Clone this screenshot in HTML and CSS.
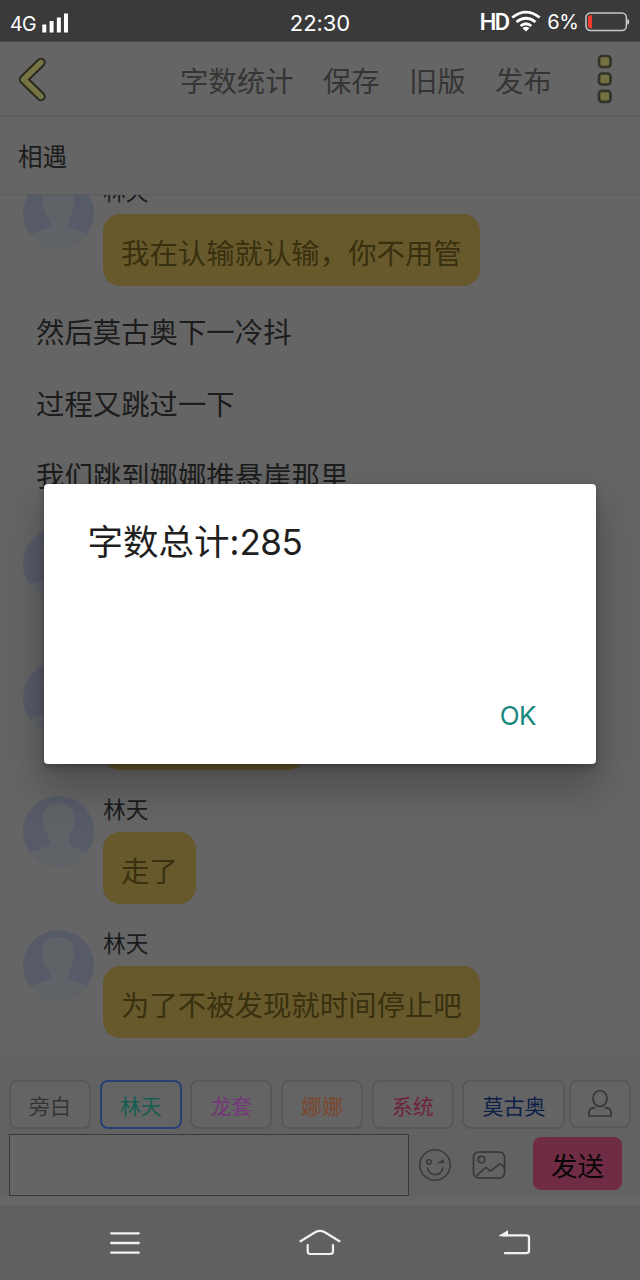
FILE: index.html
```
<!DOCTYPE html>
<html lang="zh-CN">
<head>
<meta charset="utf-8">
<title>相遇</title>
<link rel="stylesheet" href="styles.css">
</head>
<body>
<svg class="defs" width="0" height="0">
  <symbol id="avatar" viewBox="0 0 71 71">
    <clipPath id="round"><circle cx="35.5" cy="35.5" r="35.5"/></clipPath>
    <g clip-path="url(#round)">
      <rect width="71" height="71" fill="#575b68"/>
      <path d="M35.500 7C45 6 52 13 51.500 25C51 32 48 36 46 41Q45.500 46 47 49C52 52 61 54 66 58V71H5V58C11 54 21 53 27.500 48Q27 43 25 40C21 34 19 28 19.500 21C20 12 27 7 35.500 7Z" fill="#5f6367"/>
    </g>
  </symbol>
</svg>
<div class="screen">
  <div class="status">
    <span class="net">4G</span>
    <svg class="signal" width="27" height="21" viewBox="0 0 27 21" stroke="#fff" stroke-width="4" stroke-linecap="butt"><path d="M2.300 12.500V20.500M9.600 9V20.500M16.900 5.500V20.500M24 1.500V20.500"/></svg>
    <span class="clock">22:30</span>
    <span class="hd">HD</span>
    <svg class="wifi" width="30" height="22" viewBox="0 0 30 22" fill="none" stroke="#fff" stroke-width="2.700"><path d="M1.200 7.500Q15 -3.500 28.800 7.500M5.500 12Q15 4.500 24.500 12M9.600 16Q15 11.500 20.400 16"/><path d="M11.500 18.200Q15 15.500 18.500 18.200L15 21.500Z" fill="#fff" stroke="none"/></svg>
    <span class="percent">6%</span>
    <svg class="battery" width="45" height="20" viewBox="0 0 45 20"><rect x="1" y="1" width="40.500" height="17.500" rx="4.500" fill="none" stroke="#c8c8c8" stroke-width="1.500"/><path d="M7 3.300V16.200H5.500Q3 16.200 3 13.500V6Q3 3.300 5.500 3.300Z" fill="#f33c2e"/><path d="M42.500 7Q44.300 7 44.300 9.750Q44.300 12.500 42.500 12.500Z" fill="#ddd"/></svg>
  </div>
  <header class="toolbar">
    <svg class="back" width="30" height="44" viewBox="0 0 30 44" fill="none" stroke-linecap="round" stroke-linejoin="round"><path d="M23 4.500L5.500 21.500L23 38.500" stroke="#292920" stroke-width="9.500"/><path d="M23 4.500L5.500 21.500L23 38.500" stroke="#777443" stroke-width="5.500"/></svg>
    <nav class="actions"><span>字数统计</span><span>保存</span><span>旧版</span><span>发布</span></nav>
    <svg class="more" width="16" height="50" viewBox="0 0 16 50" fill="#72713f" stroke="#33332b" stroke-width="2.700"><rect x="2" y="2" width="11.500" height="11" rx="3"/><rect x="2" y="19.500" width="11.500" height="11" rx="3"/><rect x="2" y="36.800" width="11.500" height="11" rx="3"/></svg>
  </header>
  <div class="title">相遇</div>
  <main class="chat">
    <div class="row"><svg class="avatar"><use href="#avatar"/></svg><div><div class="name">林天</div><div class="bubble">我在认输就认输，你不用管</div></div></div>
    <p class="narration">然后莫古奥下一冷抖</p>
    <p class="narration">过程又跳过一下</p>
    <p class="narration">我们跳到娜娜推悬崖那里</p>
    <div class="row"><svg class="avatar"><use href="#avatar"/></svg></div>
    <div class="row"><svg class="avatar"><use href="#avatar"/></svg><div><div class="name"></div><div class="bubble covered"></div></div></div>
    <div class="row"><svg class="avatar"><use href="#avatar"/></svg><div><div class="name">林天</div><div class="bubble">走了</div></div></div>
    <div class="row"><svg class="avatar"><use href="#avatar"/></svg><div><div class="name">林天</div><div class="bubble">为了不被发现就时间停止吧</div></div></div>
  </main>
  <footer class="composer">
    <div class="roles">
      <span class="role gray">旁白</span><span class="role teal">林天</span><span class="role violet">龙套</span><span class="role orange">娜娜</span><span class="role red">系统</span><span class="role blue">莫古奥</span>
      <span class="role person"><svg width="26" height="30" viewBox="0 0 26 30" fill="none" stroke="#343434" stroke-width="1.700"><ellipse cx="13" cy="9.500" rx="7" ry="8"/><path d="M8.500 18.500Q2 19 2 23V27H24V23Q24 19 17.500 18.500"/></svg></span>
    </div>
    <div class="entry">
      <div class="input"></div>
      <svg class="smile" width="34" height="34" viewBox="0 0 34 34" fill="none" stroke="#3b3b3b" stroke-width="1.600"><circle cx="17" cy="17" r="15.200"/><circle cx="11" cy="14" r="2.200"/><path d="M9.500 19.500C11 29 23 29 25 19.500M26 12L21.500 14.500H26"/></svg>
      <svg class="picture" width="34" height="30" viewBox="0 0 34 30" fill="none" stroke="#353535" stroke-width="1.600"><rect x="1.500" y="2" width="31" height="26" rx="5"/><circle cx="9.500" cy="9.500" r="3.300"/><path d="M4.500 26L12.500 18.500Q14 17 15.500 18.500L17.500 20.500Q18.500 21 20 20L26 15Q28 13 30 15L32.500 17.500"/></svg>
      <div class="send">发送</div>
    </div>
  </footer>
  <div class="navbar">
    <svg width="30" height="26" viewBox="0 0 30 26" stroke="#f0f0f0" stroke-width="2.300" stroke-linecap="round"><path d="M1.200 3.300H28.800M1.200 13H28.800M1.200 22.700H28.800"/></svg>
    <svg class="home" width="44" height="28" viewBox="0 0 44 28" fill="none" stroke="#f0f0f0" stroke-width="2.200" stroke-linecap="round" stroke-linejoin="round"><path d="M2.500 12.200L18 2.800Q22 .8 26 2.800L41.500 12.200M9.700 16V22.500Q9.700 25 12.300 25H32Q35 25 35 22.500V16"/></svg>
    <svg width="32" height="28" viewBox="0 0 32 28" fill="none" stroke="#f0f0f0" stroke-width="2.300" stroke-linecap="round"><path d="M4 6.300H27Q30 6.300 30 8.500V21.500Q30 24.200 27 24.200H6"/><path d="M0 6.500L9 1.300V7.300H0Z" fill="#f0f0f0" stroke="none"/></svg>
  </div>
  <div class="dialog">
    <div class="message">字数总计:<span class="count">285</span></div>
    <div class="ok">OK</div>
  </div>
</div>
</body>
</html>
```
FILE: styles.css
```
body { margin: 0; background: #656565; font-family: "Noto Sans CJK SC", sans-serif; }
.defs { display: block; }
.screen { position: relative; width: 640px; height: 1280px; display: flex; flex-direction: column; overflow: hidden; background: #656565; color: #1c1c1c; }
.status { flex: none; height: 42px; box-sizing: border-box; display: flex; align-items: center; padding: 0 10px 0 10px; background: #3a3a3a; color: #fff; font: 21px/42px Roboto, sans-serif; border-bottom: 1px solid #454545; }
.net { width: 32px; font-family: Inter, sans-serif; font-size: 19.500px; letter-spacing: -.6px; padding-top: 6px; }
.signal { margin-top: 3px; }
.clock { margin-left: 221px; width: 190px; font-family: Inter, sans-serif; font-size: 22px; padding-top: 4px; letter-spacing: -.1px; }
.hd { width: 32px; font-size: 24px; font-weight: 500; letter-spacing: -1.900px; padding-top: 3px; }
.wifi { margin-right: 6px; }
.percent { width: 38px; padding-top: 3px; font-family: Inter, sans-serif; font-size: 20px; letter-spacing: -.3px; }
.battery { margin-top: 2px; }
.toolbar { flex: none; height: 75px; box-sizing: border-box; display: flex; align-items: center; padding: 0 27px 0 18px; border-bottom: 2px solid #5e5e5e; color: #353535; }
.actions { display: flex; gap: 29.300px; margin-left: 132px; font-size: 28.400px; line-height: 42px; padding-top: 3px; white-space: nowrap; }
.back { margin-top: 2px; }
.more { margin-left: auto; }
.title { flex: none; height: 78px; box-sizing: border-box; padding: 2px 18px 0; border-bottom: 1px solid #5c5c5c; font-size: 24.500px; line-height: 74px; }
.chat { flex: none; height: 861px; overflow: hidden; display: flex; flex-direction: column; }
.row { flex: none; height: 134.200px; display: flex; gap: 9px; padding-left: 23px; }
.row:first-child { margin-top: -17.500px; }
.avatar { width: 71px; height: 71px; flex: none; }
.name { height: 36px; font-size: 22.700px; line-height: 26px; color: #1b1b1b; }
.bubble { height: 72px; box-sizing: border-box; width: max-content; padding: 0 18px; border-radius: 17px; background: #67592c; color: #39300f; font-size: 28.400px; line-height: 75px; }
.covered { width: 202px; }
.narration { flex: none; height: 72px; margin: 0; padding-left: 36px; font-size: 28.400px; line-height: 38px; }
.composer { flex: none; height: 149px; box-sizing: border-box; padding: 24px 9px 0; background: #626262; border-bottom: 8px solid #666; }
.roles { display: flex; gap: 8.700px; height: 49px; }
.role { flex: none; width: 82px; height: 49px; box-sizing: border-box; border: 2px solid #585858; border-radius: 8px; background: #646464; text-align: center; font-size: 21px; line-height: 46px; }
.gray { color: #343434; }
.teal { color: #145e50; border-color: #254173; }
.violet { color: #763579; }
.orange { color: #7c482d; }
.red { color: #70243c; }
.blue { color: #0c2048; width: 103px; }
.person { width: 62px; height: 48px; margin-left: -5px; display: flex; align-items: center; justify-content: center; }
.entry { display: flex; align-items: center; height: 62px; margin-top: 5px; }
.input { width: 400px; height: 62px; box-sizing: border-box; border: 1px solid #393939; background: #656565; }
.smile { margin-left: 9px; }
.picture { margin-left: 20px; }
.send { width: 89px; height: 53px; margin: -4px 0 0 27px; border-radius: 8px; background: #702c45; color: #080608; font-size: 26.500px; line-height: 55px; text-align: center; }
.navbar { flex: none; height: 75px; box-sizing: border-box; background: #606060; display: flex; align-items: center; justify-content: space-between; padding: 1px 109px 0 110px; }
.home { margin-left: 1px; }
.dialog { position: absolute; left: 44px; top: 484px; width: 552px; height: 280px; box-sizing: border-box; padding: 29px 60px 28px 43.500px; display: flex; flex-direction: column; justify-content: space-between; border-radius: 4px; background: #fff; box-shadow: 0 22px 38px 3px rgba(0,0,0,.24), 0 3px 7px rgba(0,0,0,.28); }
.message { font-size: 35.500px; line-height: 54px; color: #1f1f1f; }
.count { font-family: Inter, sans-serif; font-size: 35px; letter-spacing: -.4px; }
.ok { align-self: flex-end; font: 26px/40px Inter, sans-serif; letter-spacing: -.5px; color: #16877b; }
```
